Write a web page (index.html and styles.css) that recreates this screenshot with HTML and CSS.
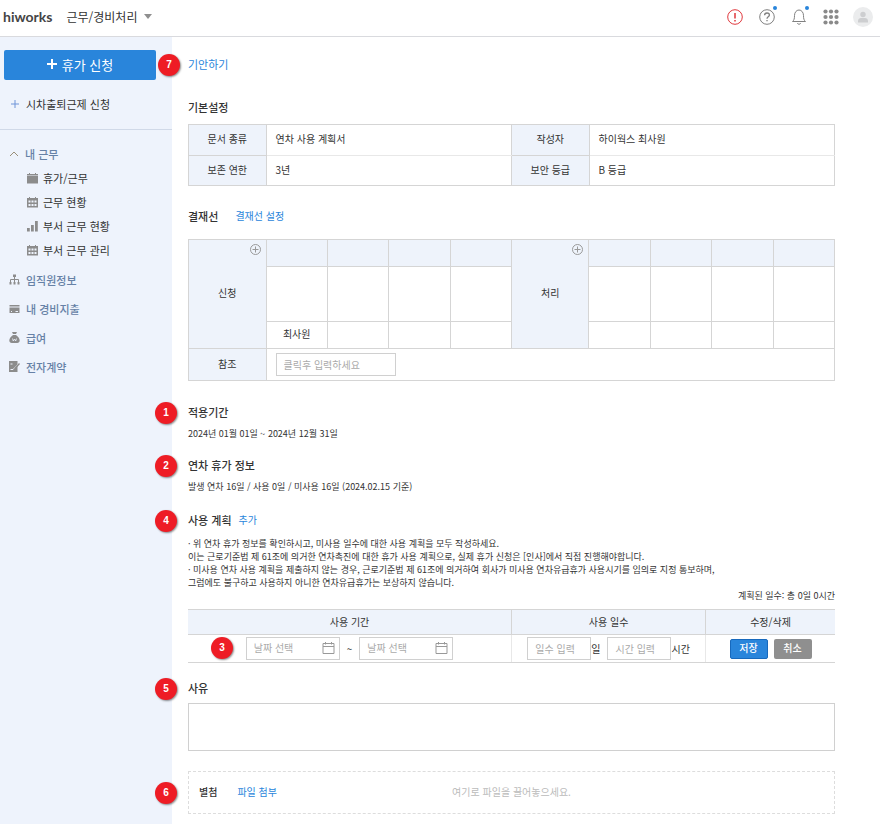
FILE: index.html
```html
<!DOCTYPE html>
<html lang="ko">
<head>
    <meta charset="UTF-8">
    <meta name="viewport" content="width=device-width, initial-scale=1.0">
    <title>연차 사용 계획서</title>
    <link rel="stylesheet" href="styles.css">
</head>
<body>
    <header class="topbar">
        <a href="#" class="logo">hiworks</a>
        <button type="button" class="app-menu">근무/경비처리
            <svg width="8" height="5" viewBox="0 0 8 5"><path d="M0 0h8L4 5z" fill="#8f8f8f"/></svg>
        </button>
        <div class="tools">
            <button type="button" class="tool" aria-label="공지">
                <svg width="16" height="16" viewBox="0 0 16 16" fill="none" stroke="#e0393e"><circle cx="8" cy="8" r="7.3"/><path d="M8 4v5.5M8 11v1.5" stroke-width="1.5"/></svg>
            </button>
            <button type="button" class="tool" aria-label="도움말">
                <svg width="16" height="16" viewBox="0 0 16 16" fill="none" stroke="#808080"><circle cx="8" cy="8" r="7.3"/><path d="M5.6 6.3c0-1.5 1-2.3 2.4-2.3s2.4.9 2.4 2.1c0 1.7-2.4 1.8-2.4 3.6M8 11v1.3" stroke-width="1.3"/></svg>
                <span class="dot"></span>
            </button>
            <button type="button" class="tool" aria-label="알림">
                <svg width="16" height="16" viewBox="0 0 16 16" fill="none" stroke="#808080"><path d="M1.5 12.5c1.6-1.3 2-2.8 2-6C3.5 3.5 5.4 1 8 1s4.500 2.500 4.500 5.500c0 3.200.4 4.700 2 6zM6.300 14.300c.6 1.200 2.800 1.200 3.400 0"/></svg>
                <span class="dot"></span>
            </button>
            <button type="button" class="tool" aria-label="전체 메뉴">
                <svg width="16" height="16" viewBox="0 0 16 16" fill="#8a8a8a"><circle cx="2.500" cy="2.500" r="2.100"/><circle cx="8" cy="2.500" r="2.100"/><circle cx="13.500" cy="2.500" r="2.100"/><circle cx="2.500" cy="8" r="2.100"/><circle cx="8" cy="8" r="2.100"/><circle cx="13.500" cy="8" r="2.100"/><circle cx="2.500" cy="13.500" r="2.100"/><circle cx="8" cy="13.500" r="2.100"/><circle cx="13.500" cy="13.500" r="2.100"/></svg>
            </button>
            <button type="button" class="tool avatar" aria-label="내 정보">
                <svg width="20" height="20" viewBox="0 0 20 20"><circle cx="10" cy="10" r="10" fill="#ebeced"/><circle cx="10" cy="7.500" r="2.700" fill="#cdced0"/><path d="M5 15.500v-1.500c0-2 1.500-3 3-3h4c1.500 0 3 1 3 3v1.500z" fill="#cdced0"/></svg>
            </button>
        </div>
    </header>

    <div class="layout">
        <nav class="sidebar">
            <button type="button" class="btn-apply">
                <svg width="10" height="10" viewBox="0 0 10 10"><path d="M5 0v10M0 5h10" stroke="#fff" stroke-width="2"/></svg>
                휴가 신청
            </button>
            <a href="#" class="sub-apply">
                <svg width="8" height="8" viewBox="0 0 8 8"><path d="M4 0v8M0 4h8" stroke="#6f94d8"/></svg>
                시차출퇴근제 신청
            </a>
            <div class="menu">
                <a href="#" class="menu-title">
                    <svg width="10" height="10" viewBox="0 0 10 10"><path d="M1 7l4-4 4 4" fill="none" stroke="#9a8f78"/></svg>
                    내 근무
                </a>
                <ul class="submenu">
                    <li><a href="#"><svg width="11" height="11" viewBox="0 0 11 11" fill="#8c8c8c"><path d="M0 1h2V0h1v1h5V0h1v1h2v1.500H0zM0 3h11v7.500H0z"/></svg>휴가/근무</a></li>
                    <li><a href="#"><svg width="11" height="11" viewBox="0 0 11 11" fill="#8c8c8c"><path d="M0 1h2V0h1v1h5V0h1v1h2v9.500H0z"/><path d="M1.500 3.500h2v2h-2zM4.500 3.500h2v2h-2zM7.500 3.500h2v2h-2zM1.500 7h2v2h-2zM4.500 7h2v2h-2zM7.500 7h2v2h-2z" fill="#eef3fc"/></svg>근무 현황</a></li>
                    <li><a href="#"><svg width="11" height="11" viewBox="0 0 11 11" fill="#8c8c8c"><path d="M0 7h2.800v3.500H0zM4 4h2.800v6.500H4zM8 0h2.800v10.500H8z"/></svg>부서 근무 현황</a></li>
                    <li><a href="#"><svg width="11" height="11" viewBox="0 0 11 11" fill="#8c8c8c"><path d="M0 1h2V0h1v1h5V0h1v1h2v9.500H0z"/><path d="M1.500 3.500h2v2h-2zM4.500 3.500h2v2h-2zM7.500 3.500h2v2h-2zM1.500 7h2v2h-2zM4.500 7h2v2h-2zM7.500 7h2v2h-2z" fill="#eef3fc"/></svg>부서 근무 관리</a></li>
                </ul>
                <a href="#" class="menu-group">
                    <svg width="11" height="11" viewBox="0 0 11 11"><path d="M5.500 2v7M1.500 9V5.500h8V9" fill="none" stroke="#8c8c8c"/><path d="M4 .5h3v2.500H4zM.5 8h2v2.500h-2zM4.500 8h2v2.500h-2zM8.500 8h2v2.500h-2z" fill="#8c8c8c"/></svg>
                    임직원정보
                </a>
                <a href="#" class="menu-group">
                    <svg width="11" height="11" viewBox="0 0 11 11"><path d="M.5 2h10v1.500H.5zM.5 4.500h10V10H.5z" fill="#8c8c8c"/><path d="M2 8.500h1M6.500 8.500h2.500" stroke="#eef3fc"/></svg>
                    내 경비지출
                </a>
                <a href="#" class="menu-group">
                    <svg width="11" height="11" viewBox="0 0 11 11"><path d="M3 0h5L7 2H4zM4 3h3c2 1.500 3.700 3.500 3.700 5.500 0 1.500-1 2.500-2.500 2.500H2.800C1.300 11 .3 10 .3 8.500.3 6.500 2 4.500 4 3z" fill="#8c8c8c"/><path d="M3.500 6.500l.8 2.500 1.200-2 1.200 2 .8-2.500" fill="none" stroke="#eef3fc" stroke-width=".8"/></svg>
                    급여
                </a>
                <a href="#" class="menu-group">
                    <svg width="11" height="11" viewBox="0 0 11 11"><path d="M0 0h8.500v11H0z" fill="#8c8c8c"/><path d="M1.500 3h2M1.500 8.500h2.500L10 2.500" fill="none" stroke="#eef3fc"/><path d="M5 9l.5-2L10 2l1 1-4.500 5z" fill="#8c8c8c"/></svg>
                    전자계약
                </a>
            </div>
        </nav>

        <main class="content">
            <div class="draft">
                <span class="step">7</span>
                <a href="#" class="link-lg">기안하기</a>
            </div>

            <section class="section basic">
                <h2>기본설정</h2>
                <table class="grid">
                    <colgroup><col class="c12"><col class="c38"><col class="c12"><col class="c38"></colgroup>
                    <tr><th>문서 종류</th><td>연차 사용 계획서</td><th>작성자</th><td>하이웍스 최사원</td></tr>
                    <tr><th>보존 연한</th><td>3년</td><th>보안 등급</th><td>B 등급</td></tr>
                </table>
            </section>

            <section class="section approval">
                <div class="title-row">
                    <h2>결재선</h2>
                    <a href="#" class="link">결재선 설정</a>
                </div>
                <table class="grid line-table">
                    <colgroup><col class="c12"><col span="4" class="slot"><col class="c12"><col span="4" class="slot"></colgroup>
                    <tr class="rank">
                        <th rowspan="3">신청<button type="button" class="add" aria-label="신청 추가"><svg width="11" height="11" viewBox="0 0 11 11"><path d="M5.500 2.500v6M2.500 5.500h6" stroke="#999"/><circle cx="5.500" cy="5.500" r="5" fill="none" stroke="#999"/></svg></button></th>
                        <td></td><td></td><td></td><td></td>
                        <th rowspan="3">처리<button type="button" class="add" aria-label="처리 추가"><svg width="11" height="11" viewBox="0 0 11 11"><path d="M5.500 2.500v6M2.500 5.500h6" stroke="#999"/><circle cx="5.500" cy="5.500" r="5" fill="none" stroke="#999"/></svg></button></th>
                        <td></td><td></td><td></td><td></td>
                    </tr>
                    <tr class="stamp"><td></td><td></td><td></td><td></td><td></td><td></td><td></td><td></td></tr>
                    <tr class="name"><td>최사원</td><td></td><td></td><td></td><td></td><td></td><td></td><td></td></tr>
                    <tr class="refer">
                        <th><label for="refer">참조</label></th>
                        <td colspan="9"><input type="text" id="refer" class="field refer-input" placeholder="클릭후 입력하세요"></td>
                    </tr>
                </table>
            </section>

            <section class="section period">
                <span class="step">1</span>
                <h2>적용기간</h2>
                <p>2024년 01월 01일 ~ 2024년 12월 31일</p>
            </section>

            <section class="section info">
                <span class="step">2</span>
                <h2>연차 휴가 정보</h2>
                <p>발생 연차 16일 / 사용 0일 / 미사용 16일 (2024.02.15 기준)</p>
            </section>

            <section class="section plan">
                <span class="step">4</span>
                <div class="title-row">
                    <h2>사용 계획</h2>
                    <a href="#" class="link">추가</a>
                </div>
                <p class="guide">· 위 연차 휴가 정보를 확인하시고, 미사용 일수에 대한 사용 계획을 모두 작성하세요.<br>
                이는 근로기준법 제 61조에 의거한 연차촉진에 대한 휴가 사용 계획으로, 실제 휴가 신청은 [인사]에서 직접 진행해야합니다.<br>
                · 미사용 연차 사용 계획을 제출하지 않는 경우, 근로기준법 제 61조에 의거하여 회사가 미사용 연차유급휴가 사용시기를 임의로 지정 통보하며,<br>
                그럼에도 불구하고 사용하지 아니한 연차유급휴가는 보상하지 않습니다.</p>
                <p class="total">계획된 일수: 총 0일 0시간</p>
                <table class="plan-table">
                    <colgroup><col class="c50"><col class="c30"><col class="c20"></colgroup>
                    <thead>
                        <tr><th>사용 기간</th><th>사용 일수</th><th>수정/삭제</th></tr>
                    </thead>
                    <tbody>
                        <tr>
                            <td>
                                <span class="step step-inner">3</span>
                                <div class="cell dates">
                                    <div class="date">
                                        <input type="text" class="field" placeholder="날짜 선택" aria-label="시작일">
                                        <svg width="13" height="12" viewBox="0 0 13 12" fill="none" stroke="#999"><path d="M1 1.500h11v10H1zM1 4.500h11M3.500 0v2.500M9.500 0v2.500"/></svg>
                                    </div>
                                    <span>~</span>
                                    <div class="date">
                                        <input type="text" class="field" placeholder="날짜 선택" aria-label="종료일">
                                        <svg width="13" height="12" viewBox="0 0 13 12" fill="none" stroke="#999"><path d="M1 1.500h11v10H1zM1 4.500h11M3.500 0v2.500M9.500 0v2.500"/></svg>
                                    </div>
                                </div>
                            </td>
                            <td>
                                <div class="cell amounts">
                                    <label><input type="text" class="field" placeholder="일수 입력">일</label>
                                    <label><input type="text" class="field" placeholder="시간 입력">시간</label>
                                </div>
                            </td>
                            <td>
                                <div class="cell actions">
                                    <button type="button" class="btn save">저장</button>
                                    <button type="button" class="btn cancel">취소</button>
                                </div>
                            </td>
                        </tr>
                    </tbody>
                </table>
            </section>

            <section class="section reason">
                <span class="step">5</span>
                <h2><label for="reason">사유</label></h2>
                <textarea id="reason"></textarea>
            </section>

            <section class="attach">
                <span class="step">6</span>
                <strong>별첨</strong>
                <button type="button" class="link">파일 첨부</button>
                <span class="drop-text">여기로 파일을 끌어놓으세요.</span>
            </section>
        </main>
    </div>
</body>
</html>
```
FILE: styles.css
```css
* {
    box-sizing: border-box;
}
body {
    margin: 0;
    min-height: 100vh;
    display: flex;
    flex-direction: column;
    font-family: "Noto Sans CJK KR", sans-serif;
    font-size: 10px;
    color: #333;
    background-color: #fff;
}
button, input, textarea {
    font-family: inherit;
    color: inherit;
}
button {
    padding: 0;
    border: none;
    background: none;
    cursor: pointer;
}
a {
    text-decoration: none;
    color: inherit;
}
svg {
    display: block;
    flex-shrink: 0;
}
h2, p, ul {
    margin: 0;
    padding: 0;
}

/* top bar */
.topbar {
    height: 37px;
    padding: 0 7px 3px 3px;
    display: flex;
    align-items: center;
    border-bottom: 1px solid #d9dade;
}
.logo {
    font-family: Lato, sans-serif;
    font-size: 14px;
    font-weight: 700;
    color: #444;
}
.app-menu {
    margin-left: 14px;
    display: flex;
    align-items: center;
    gap: 7px;
    font-size: 12px;
}
.tools {
    margin-left: auto;
    display: flex;
    align-items: center;
    gap: 16px;
}
.tool {
    position: relative;
}
.avatar {
    margin-left: -2px;
}
.dot {
    position: absolute;
    top: -3px;
    right: -2px;
    width: 4px;
    height: 4px;
    border-radius: 50%;
    background-color: #2985db;
}

/* sidebar */
.layout {
    flex: 1;
    display: flex;
}
.sidebar {
    flex: 0 0 172px;
    background-color: #eef3fc;
    padding-top: 13px;
}
.btn-apply {
    width: 152px;
    height: 30px;
    margin-left: 4px;
    padding-bottom: 2px;
    display: flex;
    align-items: center;
    justify-content: center;
    gap: 5px;
    border-radius: 2px;
    background-color: #2985db;
    color: #fff;
    font-size: 13px;
}
.sub-apply {
    height: 50px;
    padding: 0 0 1px 11px;
    display: flex;
    align-items: center;
    gap: 7px;
    border-bottom: 1px solid #d0d9e8;
    font-size: 11px;
}
.menu {
    padding: 12px 0 0 9px;
    font-size: 11px;
}
.menu-title, .menu-group {
    display: flex;
    align-items: center;
    gap: 6px;
    color: #6681a6;
    font-weight: 500;
}
.menu-title {
    height: 24px;
}
.menu-group {
    height: 29px;
}
.submenu {
    list-style: none;
    margin: 0 0 3px 18px;
}
.submenu a {
    height: 24px;
    display: flex;
    align-items: center;
    gap: 5px;
}

/* content */
.content {
    flex: 1;
    min-width: 0;
    padding: 19px 45px 10px 16px;
}
.draft, .section, .attach {
    position: relative;
}
.draft {
    height: 16px;
    line-height: 16px;
}
.link-lg, .link {
    color: #2985db;
}
.link-lg {
    font-size: 11px;
}
.link {
    font-size: 10px;
}
h2 {
    font-size: 11px;
    font-weight: 500;
    line-height: 16px;
}
.title-row {
    display: flex;
    align-items: center;
    line-height: 16px;
}
.section p {
    font-size: 9px;
    line-height: 13px;
    margin-top: 7px;
}
.basic {
    margin-top: 27px;
}
.approval {
    margin-top: 22px;
}
.approval .title-row {
    gap: 17px;
}
.period {
    margin-top: 23px;
}
.info {
    margin-top: 17px;
}
.plan {
    margin-top: 19px;
}
.plan .title-row {
    gap: 7px;
}
.reason {
    margin-top: 17px;
}

/* numbered step markers */
.step {
    position: absolute;
    top: -2px;
    left: -33px;
    width: 22px;
    height: 22px;
    border-radius: 50%;
    background-color: #ee1c25;
    box-shadow: 1px 1px 2px rgba(0,0,0,0.45);
    color: #fff;
    font-family: "Liberation Sans", sans-serif;
    font-size: 10px;
    font-weight: bold;
    line-height: 22px;
    text-align: center;
}
.draft .step {
    left: -30px;
}

/* tables */
table {
    width: 100%;
    table-layout: fixed;
    border-collapse: collapse;
}
th {
    background-color: #eef3fb;
    font-weight: 400;
}
.c12 {
    width: 12%;
}
.c38 {
    width: 38%;
}
.c50 {
    width: 50%;
}
.c30 {
    width: 30%;
}
.c20 {
    width: 20%;
}
.grid {
    margin-top: 9px;
}
.grid th, .grid td {
    border: 1px solid #d5d5d5;
    height: 30px;
    padding: 0 9px 3px;
}
.basic tr:first-child {
    height: 31px;
}
.basic td {
    border-bottom-color: #e8e8e8;
    border-top-color: #e8e8e8;
}
.basic tr:first-child > * {
    border-top-color: #d5d5d5;
}
.basic tr:last-child > * {
    border-bottom-color: #d5d5d5;
}
.line-table {
    margin-top: 15px;
}
.line-table th {
    position: relative;
}
.line-table td {
    padding: 0 0 3px;
    text-align: center;
}
.line-table .rank td {
    height: 27px;
    background-color: #eef3fb;
}
.line-table .stamp td {
    height: 55px;
}
.line-table .name td {
    height: 27px;
}
.line-table .refer td {
    height: 32px;
    padding: 0 0 0 9px;
    text-align: left;
}
.add {
    position: absolute;
    top: 4px;
    right: 5px;
}
.field {
    height: 23px;
    padding: 0 7px 1px;
    border: 1px solid #d0d0d0;
    font-size: 10px;
    background-color: #fff;
}
.field::placeholder {
    color: #aaa;
}
.refer-input {
    display: block;
    width: 120px;
}
.section .total {
    margin-top: 0;
    text-align: right;
}
.section .guide {
    margin-top: 9px;
    white-space: nowrap;
}
.plan-table {
    margin-top: 7px;
}
.plan-table th, .plan-table td {
    position: relative;
    padding: 0;
    border: 1px solid #d5d5d5;
}
.plan-table th {
    height: 25px;
    padding-bottom: 2px;
}
.plan-table td {
    height: 28px;
    border-left-color: #e8e8e8;
    border-right-color: #e8e8e8;
}
.plan-table tr > :first-child {
    border-left: none;
}
.plan-table tr > :last-child {
    border-right: none;
}
.plan-table .step-inner {
    top: 2px;
    left: 23px;
}
.cell {
    display: flex;
    align-items: center;
    justify-content: center;
}
.dates {
    gap: 7px;
}
.date {
    display: flex;
    align-items: center;
    width: 94px;
    height: 23px;
    padding: 0 4px 2px 0;
    border: 1px solid #d0d0d0;
}
.date .field {
    flex: 1;
    min-width: 0;
    height: 19px;
    padding-bottom: 0;
    border: none;
}
.amounts {
    gap: 7px;
}
.amounts label {
    display: flex;
    align-items: center;
}
.amounts .field {
    width: 64px;
}
.actions {
    gap: 6px;
}
.btn {
    width: 38px;
    height: 20px;
    padding-bottom: 2px;
    border-radius: 2px;
    color: #fff;
    font-size: 10px;
    font-weight: 500;
    line-height: 16px;
}
.save {
    background-color: #2985db;
    border: 1px solid #1769bd;
}
.cancel {
    background-color: #8f8f8f;
}

/* reason and attachments */
textarea {
    display: block;
    width: 100%;
    height: 48px;
    margin-top: 7px;
    padding: 6px;
    border: 1px solid #d0d0d0;
    resize: none;
    font-size: 10px;
}
.attach {
    margin-top: 20px;
    height: 43px;
    padding: 0 10px 3px;
    display: flex;
    align-items: center;
    gap: 20px;
    border: 1px dashed #ddd;
}
.attach .step {
    top: 10px;
    left: -34px;
}
.attach strong {
    font-weight: 500;
}
/* the hint sits in the middle of the whole drop area */
.drop-text {
    position: absolute;
    left: 0;
    right: 0;
    text-align: center;
    color: #bbb;
    pointer-events: none;
}
```
